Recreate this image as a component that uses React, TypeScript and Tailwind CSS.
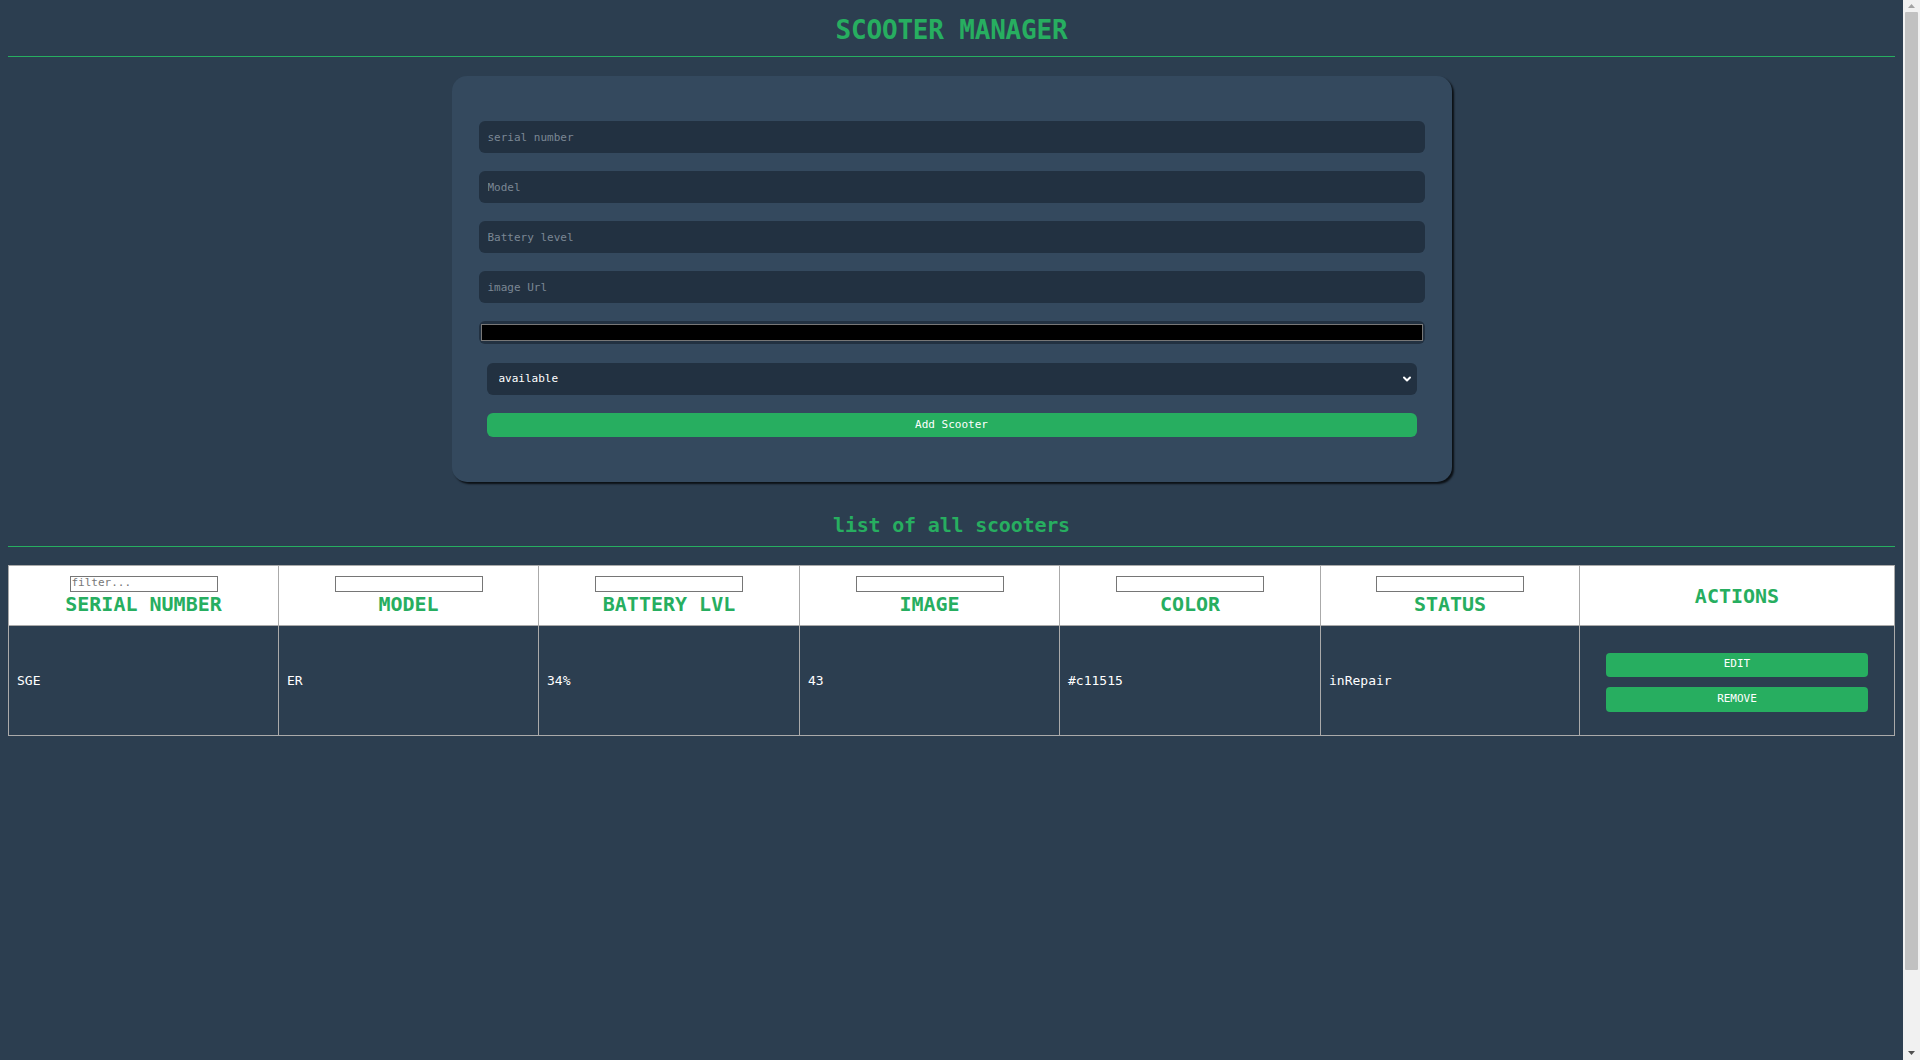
import { ChevronDown } from 'lucide-react';

const columns = [
  { label: 'SERIAL NUMBER', width: 'w-[270px]', placeholder: 'filter...' },
  { label: 'MODEL', width: 'w-[260px]', placeholder: '' },
  { label: 'BATTERY LVL', width: 'w-[261px]', placeholder: '' },
  { label: 'IMAGE', width: 'w-[260px]', placeholder: '' },
  { label: 'COLOR', width: 'w-[261px]', placeholder: '' },
  { label: 'STATUS', width: 'w-[259px]', placeholder: '' },
];

const scooters = [
  { serial: 'SGE', model: 'ER', battery: '34%', image: '43', color: '#c11515', status: 'inRepair' },
];

const fields = ['serial number', 'Model', 'Battery level', 'image Url'];

// browser scrollbar drawn at the right edge, as in the screenshot
const Scrollbar = () => (
  <div className="flex w-[17px] shrink-0 flex-col bg-[#f1f1f1]">
    <div className="flex h-[12px] items-center justify-center">
      <svg width="7" height="4" viewBox="0 0 7 4">
        <path d="M0 4 L3.5 0 L7 4 Z" fill="#a3a3a3" />
      </svg>
    </div>
    <div className="mx-[2px] h-[958px] rounded-[1px] bg-[#c1c1c1]" />
    <div className="flex-1" />
    <div className="flex h-[14px] items-center justify-center">
      <svg width="7" height="4" viewBox="0 0 7 4">
        <path d="M0 0 L7 0 L3.5 4 Z" fill="#505050" />
      </svg>
    </div>
  </div>
);

export default function App() {
  return (
    <div className="flex h-screen overflow-hidden bg-[#2c3e50]">
      <div className="min-w-0 flex-1 px-2 font-['DejaVu_Sans_Mono',monospace]">
        {/* Header */}
        <h1 className="h-[56px] pt-[5px] flex items-center justify-center text-[26px] font-bold text-[#27ae60] tracking-[-0.2px]">
          SCOOTER MANAGER
        </h1>
        <div className="border-t border-[#27ae60]" />

        {/* Add form */}
        <div className="mx-auto mt-[19px] w-[1000px] rounded-[15px] bg-[#34495e] px-[27px] py-[45px] shadow-[2px_2px_2px_rgba(0,0,0,0.75)]">
          <div className="flex flex-col gap-[18px]">
            {fields.map((f) => (
              <input
                key={f}
                placeholder={f}
                className="h-[32px] w-full rounded-md bg-[#223141] px-[9px] text-[11px] text-white outline-none placeholder:text-[#7b8794]"
              />
            ))}
            <div className="h-[23px] rounded-md bg-[#223141] px-[2px] py-[3px]">
              <div className="h-full w-full border border-[#777] bg-black" />
            </div>
          </div>
          <div className="mt-[19px] px-2 flex flex-col gap-[18px]">
            <div className="relative">
              <select className="h-[32px] w-full appearance-none rounded-md bg-[#223141] px-3 text-[11px] text-white outline-none">
                <option>available</option>
                <option>inRepair</option>
              </select>
              <ChevronDown className="absolute right-[4px] top-[10px] h-3 w-3 text-white" strokeWidth={4} />
            </div>
            <button className="h-[24px] w-full rounded-md bg-[#27ae60] text-[11px] text-white">
              Add Scooter
            </button>
          </div>
        </div>

        {/* List */}
        <h2 className="mt-[31px] h-[24px] flex items-center justify-center text-[20px] font-bold text-[#27ae60] tracking-[-0.2px]">
          list of all scooters
        </h2>
        <div className="mt-[9px] border-t border-[#27ae60]" />

        <table className="mt-[18px] w-full border-collapse border border-[#aaa] text-[13px] text-white">
          <thead>
            <tr className="h-[60px] bg-white">
              {columns.map((c) => (
                <th key={c.label} className={`${c.width} border border-[#aaa] p-0 align-middle`}>
                  <div className="flex flex-col items-center">
                    <input
                      placeholder={c.placeholder}
                      className="h-[16px] w-[148px] border border-[#767676] bg-white px-[1px] text-[11px] font-normal text-black outline-none placeholder:text-[#777]"
                    />
                    <span className="mt-[1px] text-[20px] leading-[23px] font-bold text-[#27ae60]">{c.label}</span>
                  </div>
                </th>
              ))}
              <th className="border border-[#aaa] text-[20px] font-bold text-[#27ae60]">ACTIONS</th>
            </tr>
          </thead>
          <tbody>
            {scooters.map((s) => (
              <tr key={s.serial} className="h-[110px]">
                <td className="border border-[#aaa] px-2">{s.serial}</td>
                <td className="border border-[#aaa] px-2">{s.model}</td>
                <td className="border border-[#aaa] px-2">{s.battery}</td>
                <td className="border border-[#aaa] px-2">{s.image}</td>
                <td className="border border-[#aaa] px-2">{s.color}</td>
                <td className="border border-[#aaa] px-2">{s.status}</td>
                <td className="border border-[#aaa] px-[26px] pt-[3px]">
                  <div className="flex flex-col gap-[10px]">
                    <button className="h-[24px] w-full rounded-[4px] bg-[#27ae60] text-[11px] text-white">EDIT</button>
                    <button className="h-[25px] w-full rounded-[4px] bg-[#27ae60] text-[11px] text-white">REMOVE</button>
                  </div>
                </td>
              </tr>
            ))}
          </tbody>
        </table>
      </div>
      <Scrollbar />
    </div>
  );
}
